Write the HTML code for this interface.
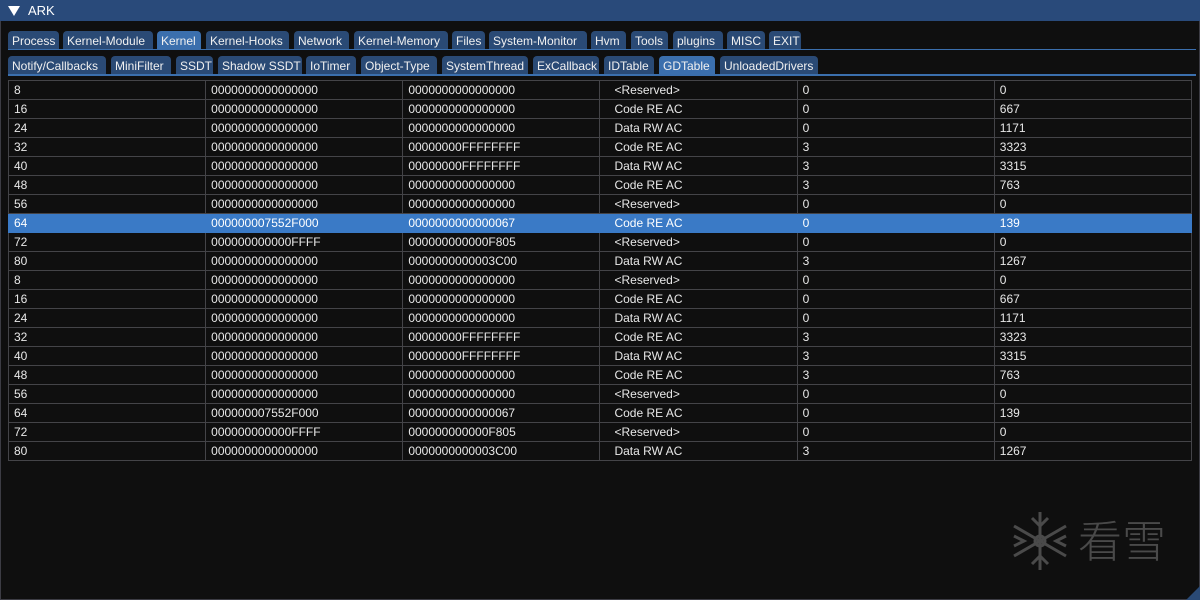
<!DOCTYPE html>
<html><head><meta charset="utf-8"><style>
*{margin:0;padding:0;box-sizing:border-box}
body{width:1200px;height:600px;background:#0f0f0f;font-family:"Liberation Sans","DejaVu Sans",sans-serif;font-size:12px;color:#e8e8e8;position:relative;overflow:hidden}
.win{position:absolute;left:0;top:0;width:1200px;height:600px;border:1px solid #3c3c44}
.title{position:absolute;left:0;top:0;width:1200px;height:21px;background:#294a7a;color:#fff;font-size:13px}
.title span{position:absolute;left:28px;top:3px}
.tri{position:absolute;left:8px;top:6px;width:0;height:0;border-left:6px solid transparent;border-right:6px solid transparent;border-top:10px solid #fff}
.tab{position:absolute;height:19px;background:#2a4a75;color:#f0f0f0;border-radius:4px 4px 0 0;padding:3px 0 0 4px;white-space:nowrap;font-size:12px;overflow:hidden}
.tab.a{background:#3b6fad}
.line{position:absolute;left:8px;width:1188px;height:2px;background:#3b6fad}
table{position:absolute;left:8px;top:80px;border-collapse:collapse;width:1184px}
td{border:1px solid #444448;height:19px;padding:0 0 0 5px;font-size:12px;line-height:17px;width:197px}
td.c4{padding-left:14px}
tr.sel td{background:#3a7ac6;color:#fff;border-color:#3a7ac6}
.logo{position:absolute;color:#4a4a4a;font-size:44px;font-family:"Noto Sans CJK SC",sans-serif;font-weight:300;line-height:1}
</style></head><body>
<div class="win"></div>
<div class="title"><div class="tri"></div><span>ARK</span></div>
<div class="tab" style="left:8px;top:31px;width:51px">Process</div>
<div class="tab" style="left:63px;top:31px;width:90px">Kernel-Module</div>
<div class="tab a" style="left:157px;top:31px;width:44px">Kernel</div>
<div class="tab" style="left:206px;top:31px;width:83px">Kernel-Hooks</div>
<div class="tab" style="left:294px;top:31px;width:55px">Network</div>
<div class="tab" style="left:354px;top:31px;width:94px">Kernel-Memory</div>
<div class="tab" style="left:452px;top:31px;width:33px">Files</div>
<div class="tab" style="left:489px;top:31px;width:98px">System-Monitor</div>
<div class="tab" style="left:591px;top:31px;width:35px">Hvm</div>
<div class="tab" style="left:631px;top:31px;width:37px">Tools</div>
<div class="tab" style="left:673px;top:31px;width:50px">plugins</div>
<div class="tab" style="left:727px;top:31px;width:38px">MISC</div>
<div class="tab" style="left:769px;top:31px;width:32px">EXIT</div>
<div class="line" style="top:49px;height:1px"></div>
<div class="tab" style="left:8px;top:56px;width:98px">Notify/Callbacks</div>
<div class="tab" style="left:111px;top:56px;width:60px">MiniFilter</div>
<div class="tab" style="left:176px;top:56px;width:37px">SSDT</div>
<div class="tab" style="left:218px;top:56px;width:84px">Shadow SSDT</div>
<div class="tab" style="left:306px;top:56px;width:50px">IoTimer</div>
<div class="tab" style="left:361px;top:56px;width:76px">Object-Type</div>
<div class="tab" style="left:442px;top:56px;width:86px">SystemThread</div>
<div class="tab" style="left:533px;top:56px;width:66px">ExCallback</div>
<div class="tab" style="left:604px;top:56px;width:50px">IDTable</div>
<div class="tab a" style="left:659px;top:56px;width:56px">GDTable</div>
<div class="tab" style="left:720px;top:56px;width:98px">UnloadedDrivers</div>
<div class="line" style="top:74px"></div>
<table>
<tr><td>8</td><td>0000000000000000</td><td>0000000000000000</td><td class="c4">&lt;Reserved&gt;</td><td>0</td><td>0</td></tr>
<tr><td>16</td><td>0000000000000000</td><td>0000000000000000</td><td class="c4">Code RE AC</td><td>0</td><td>667</td></tr>
<tr><td>24</td><td>0000000000000000</td><td>0000000000000000</td><td class="c4">Data RW AC</td><td>0</td><td>1171</td></tr>
<tr><td>32</td><td>0000000000000000</td><td>00000000FFFFFFFF</td><td class="c4">Code RE AC</td><td>3</td><td>3323</td></tr>
<tr><td>40</td><td>0000000000000000</td><td>00000000FFFFFFFF</td><td class="c4">Data RW AC</td><td>3</td><td>3315</td></tr>
<tr><td>48</td><td>0000000000000000</td><td>0000000000000000</td><td class="c4">Code RE AC</td><td>3</td><td>763</td></tr>
<tr><td>56</td><td>0000000000000000</td><td>0000000000000000</td><td class="c4">&lt;Reserved&gt;</td><td>0</td><td>0</td></tr>
<tr class="sel"><td>64</td><td>000000007552F000</td><td>0000000000000067</td><td class="c4">Code RE AC</td><td>0</td><td>139</td></tr>
<tr><td>72</td><td>000000000000FFFF</td><td>000000000000F805</td><td class="c4">&lt;Reserved&gt;</td><td>0</td><td>0</td></tr>
<tr><td>80</td><td>0000000000000000</td><td>0000000000003C00</td><td class="c4">Data RW AC</td><td>3</td><td>1267</td></tr>
<tr><td>8</td><td>0000000000000000</td><td>0000000000000000</td><td class="c4">&lt;Reserved&gt;</td><td>0</td><td>0</td></tr>
<tr><td>16</td><td>0000000000000000</td><td>0000000000000000</td><td class="c4">Code RE AC</td><td>0</td><td>667</td></tr>
<tr><td>24</td><td>0000000000000000</td><td>0000000000000000</td><td class="c4">Data RW AC</td><td>0</td><td>1171</td></tr>
<tr><td>32</td><td>0000000000000000</td><td>00000000FFFFFFFF</td><td class="c4">Code RE AC</td><td>3</td><td>3323</td></tr>
<tr><td>40</td><td>0000000000000000</td><td>00000000FFFFFFFF</td><td class="c4">Data RW AC</td><td>3</td><td>3315</td></tr>
<tr><td>48</td><td>0000000000000000</td><td>0000000000000000</td><td class="c4">Code RE AC</td><td>3</td><td>763</td></tr>
<tr><td>56</td><td>0000000000000000</td><td>0000000000000000</td><td class="c4">&lt;Reserved&gt;</td><td>0</td><td>0</td></tr>
<tr><td>64</td><td>000000007552F000</td><td>0000000000000067</td><td class="c4">Code RE AC</td><td>0</td><td>139</td></tr>
<tr><td>72</td><td>000000000000FFFF</td><td>000000000000F805</td><td class="c4">&lt;Reserved&gt;</td><td>0</td><td>0</td></tr>
<tr><td>80</td><td>0000000000000000</td><td>0000000000003C00</td><td class="c4">Data RW AC</td><td>3</td><td>1267</td></tr>
</table>
<svg style="position:absolute;left:1010px;top:510px" width="60" height="62" viewBox="0 0 60 62" stroke="#4a4a4a" stroke-width="3" fill="none">
<line x1="30" y1="2" x2="30" y2="60"/><line x1="4" y1="16" x2="56" y2="46"/><line x1="4" y1="46" x2="56" y2="16"/>
<polyline points="22,8 30,16 38,8"/><polyline points="22,54 30,46 38,54"/>
<polyline points="4,26 14,31 4,36"/><polyline points="56,26 46,31 56,36"/>
<circle cx="30" cy="31" r="5"/>
</svg>
<div class="logo" style="left:1078px;top:516px">看雪</div>
<div style="position:absolute;right:0;bottom:0;width:0;height:0;border-left:14px solid transparent;border-bottom:14px solid #2a4a75"></div>
</body></html>
